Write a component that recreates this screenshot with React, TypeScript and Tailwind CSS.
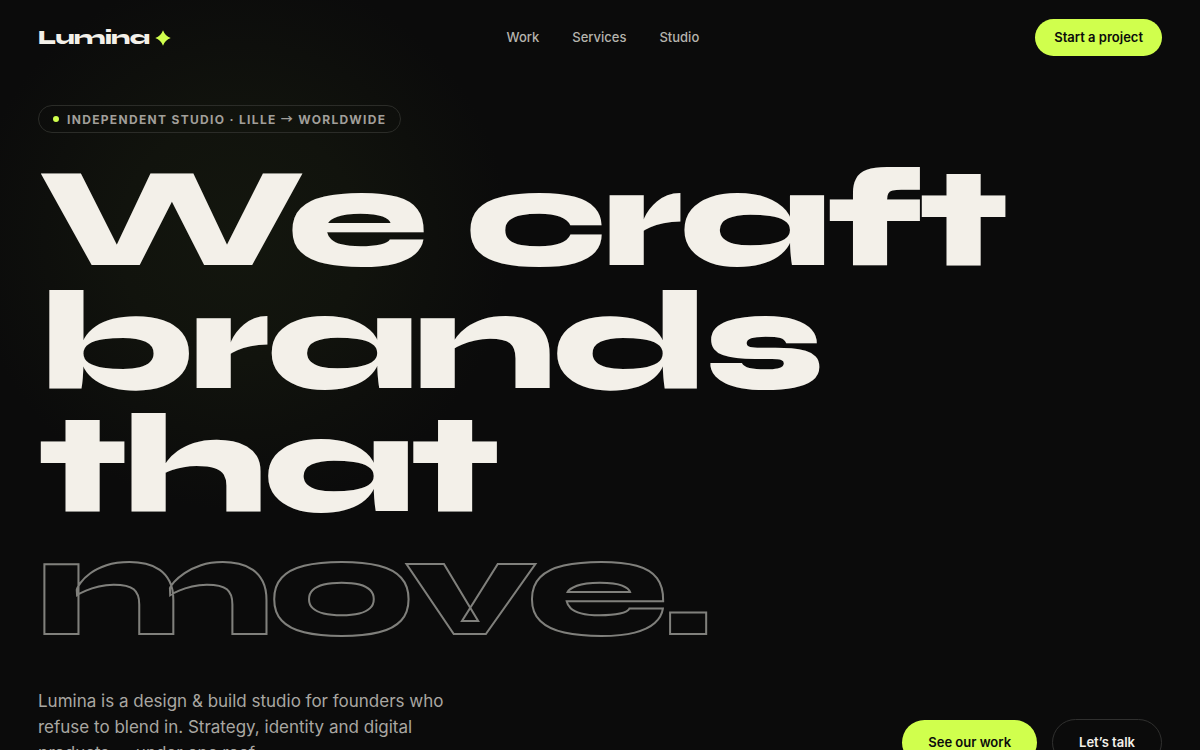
const navLinks = [
  { label: "Work", href: "#work" },
  { label: "Services", href: "#services" },
  { label: "Studio", href: "#studio" },
];

const Spark = () => (
  <svg viewBox="0 0 16 16" className="w-4 h-4 fill-[#d0ff4d]" aria-hidden="true">
    <path d="M8 0.3 Q10 6 15.7 8 Q10 10 8 15.7 Q6 10 0.3 8 Q6 6 8 0.3 Z" />
  </svg>
);

const Header = () => {
  return (
    <header className="flex items-center justify-between px-[38px] pt-[19px]">
      <a
        href="#top"
        className="flex items-center gap-[5px] font-['Syne','DejaVu_Sans',sans-serif] text-[19px] leading-6 font-extrabold tracking-tight"
      >
        Lumina
        <Spark />
      </a>
      <nav className="flex gap-[33px] text-[13px] font-medium text-[#b6b4ae]">
        {navLinks.map((link) => (
          <a key={link.label} href={link.href}>
            {link.label}
          </a>
        ))}
      </nav>
      <button className="h-[37px] rounded-full bg-[#d0ff4d] px-[19px] text-[13px] font-semibold text-[#0b0b0b]">
        Start a project
      </button>
    </header>
  );
};

const Hero = () => {
  return (
    <section className="px-[38px] pt-[49px] pb-16">
      <p className="flex h-7 w-fit items-center gap-2 rounded-full border border-[#2b2c28] px-[14px] text-xs font-bold uppercase tracking-[0.11em] text-[#a19f9a]">
        <span className="h-1.5 w-1.5 rounded-full bg-[#d0ff4d]" />
        <span>
          Independent studio · Lille <span className="font-['Noto_Sans_CJK_JP',sans-serif] leading-4">→</span>{" "}
          Worldwide
        </span>
      </p>

      <h1 className="mt-[25px] font-['Syne','DejaVu_Sans',sans-serif] text-7xl font-extrabold tracking-tight lg:text-[142px] lg:leading-[123px]">
        <span className="block">We craft</span>
        <span className="block">brands</span>
        <span className="block">that</span>
        <span className="block text-transparent [-webkit-text-stroke:2px_#80807c]">move.</span>
      </h1>

      <div className="mt-[38px] flex flex-wrap items-end justify-between gap-8">
        <p className="max-w-[420px] text-[17px] leading-[26px] text-[#a9a7a2]">
          Lumina is a design &amp; build studio for founders who refuse to blend in. Strategy, identity and digital
          products — under one roof.
        </p>
        <div className="flex items-center gap-[15px] text-[13px] font-semibold">
          <button className="h-[45px] rounded-full bg-[#d0ff4d] px-[26px] text-[#0b0b0b]">See our work</button>
          <button className="h-[47px] rounded-full border border-[#30302f] px-[26px]">Let’s talk</button>
        </div>
      </div>
    </section>
  );
};

const App = () => {
  return (
    <div
      id="top"
      className="min-h-screen bg-[#0b0b0b] bg-[radial-gradient(circle_at_240px_240px,#13160e_0px,#11130d_120px,#0b0b0b_270px)] font-['Inter',sans-serif] text-[#f3f0e9]"
    >
      <Header />
      <Hero />
    </div>
  );
};

export default App;
